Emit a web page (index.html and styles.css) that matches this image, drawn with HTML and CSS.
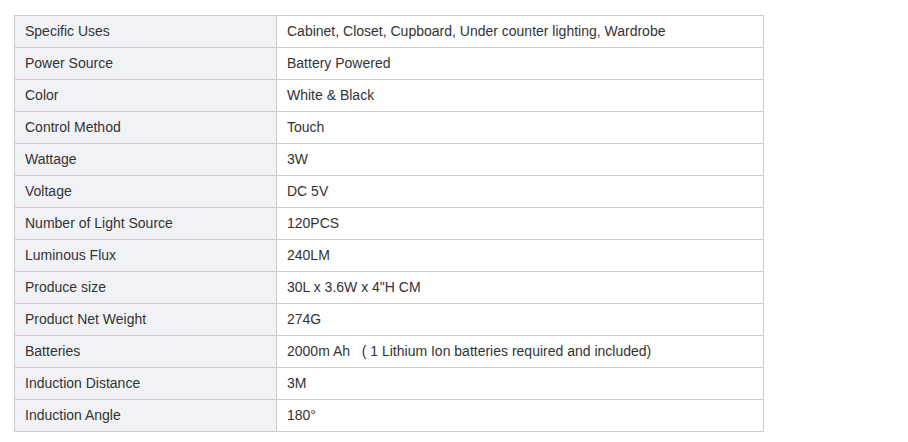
FILE: index.html
```html
<!DOCTYPE html>
<html>
<head>
<meta charset="utf-8">
<link rel="stylesheet" href="styles.css">
</head>
<body>
<table class="spec">
<tbody>
<tr><td class="k">Specific Uses</td><td class="v">Cabinet, Closet, Cupboard, Under counter lighting, Wardrobe</td></tr>
<tr><td class="k">Power Source</td><td class="v">Battery Powered</td></tr>
<tr><td class="k">Color</td><td class="v">White &amp; Black</td></tr>
<tr><td class="k">Control Method</td><td class="v">Touch</td></tr>
<tr><td class="k">Wattage</td><td class="v">3W</td></tr>
<tr><td class="k">Voltage</td><td class="v">DC 5V</td></tr>
<tr><td class="k">Number of Light Source</td><td class="v">120PCS</td></tr>
<tr><td class="k">Luminous Flux</td><td class="v">240LM</td></tr>
<tr><td class="k">Produce size</td><td class="v">30L x 3.6W x 4"H CM</td></tr>
<tr><td class="k">Product Net Weight</td><td class="v">274G</td></tr>
<tr><td class="k">Batteries</td><td class="v">2000m Ah &nbsp;&nbsp;( 1 Lithium Ion batteries required and included)</td></tr>
<tr><td class="k">Induction Distance</td><td class="v">3M</td></tr>
<tr><td class="k">Induction Angle</td><td class="v">180°</td></tr>
</tbody>
</table>
</body>
</html>
```
FILE: styles.css
```css
html, body {
  margin: 0;
  padding: 0;
  background: #ffffff;
}
body {
  padding: 15px 0 0 14px;
  font-family: "Liberation Sans", Arial, sans-serif;
  font-size: 14px;
  color: #333333;
}
.spec {
  border-collapse: collapse;
  width: 750px;
  table-layout: fixed;
}
.spec td {
  border: 1px solid #cccccc;
  padding: 0 10px 2px;
  box-sizing: border-box;
  height: 32px;
  line-height: 16px;
  vertical-align: middle;
  white-space: nowrap;
}
.spec td.k {
  width: 262px;
  background: #f1f2f6;
}
.spec td.v {
  background: #ffffff;
}
```
